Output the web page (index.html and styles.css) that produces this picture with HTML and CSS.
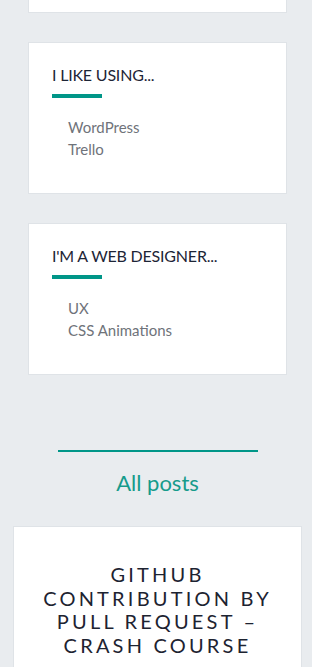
FILE: index.html
```html
<!DOCTYPE html>
<html lang="en">
<head>
    <meta charset="UTF-8">
    <meta name="viewport" content="width=device-width, initial-scale=1.0">
    <title>Blog</title>
    <link rel="stylesheet" href="styles.css">
</head>
<body>
    <aside class="sidebar">
        <div class="widget widget-cut"></div>
        <div class="widget">
            <h3 class="widget-title">I like using...</h3>
            <ul class="widget-list">
                <li>WordPress</li>
                <li>Trello</li>
            </ul>
        </div>
        <div class="widget">
            <h3 class="widget-title">I'm a web designer...</h3>
            <ul class="widget-list">
                <li>UX</li>
                <li>CSS Animations</li>
            </ul>
        </div>
    </aside>
    <main class="posts">
        <div class="posts-header">
            <hr class="posts-line">
            <a class="posts-link" href="#">All posts</a>
        </div>
        <article class="post-card">
            <h2 class="post-title">Github contribution by pull request – crash course</h2>
        </article>
    </main>
</body>
</html>
```

FILE: styles.css
```css
body {
    margin: 0;
    background-color: #e9ecef;
    font-family: Lato, "Open Sans", sans-serif;
}
.sidebar {
    margin: 0 25px 0 28px;
    display: flex;
    flex-direction: column;
    gap: 29px;
}
.widget {
    background-color: #fff;
    border: 1px solid #dfe3e7;
    padding: 22px 23px 33px;
}
.widget-cut {
    height: 12px;
    padding: 0;
    border-top: none;
}
.widget-title {
    margin: 0;
    font-size: 16px;
    font-weight: 400;
    line-height: 1.2;
    letter-spacing: -0.2px;
    text-transform: uppercase;
    color: #1d2536;
}
.widget-title::after {
    content: "";
    display: block;
    width: 50px;
    height: 4px;
    margin-top: 10px;
    background-color: #009688;
}
.widget-list {
    list-style: none;
    margin: 18px 0 0;
    padding-left: 16px;
    font-size: 15px;
    line-height: 22px;
    color: #6f737a;
}
.posts {
    margin: 0 10px 0 13px;
}
.posts-header {
    padding-top: 75px;
    text-align: center;
}
.posts-line {
    width: 200px;
    height: 2px;
    margin: 0 auto;
    border: none;
    background-color: #009688;
}
.posts-link {
    display: block;
    margin-top: 18px;
    font-size: 22px;
    line-height: 26px;
    color: #169b8b;
    text-decoration: none;
}
.post-card {
    margin-top: 30px;
    background-color: #fff;
    border: 1px solid #dfe3e7;
    padding: 36px 16px 40px;
}
.post-title {
    margin: 0;
    font-size: 20px;
    font-weight: 400;
    line-height: 23.4px;
    letter-spacing: 3.2px;
    text-align: center;
    text-transform: uppercase;
    color: #1d2331;
}
```
